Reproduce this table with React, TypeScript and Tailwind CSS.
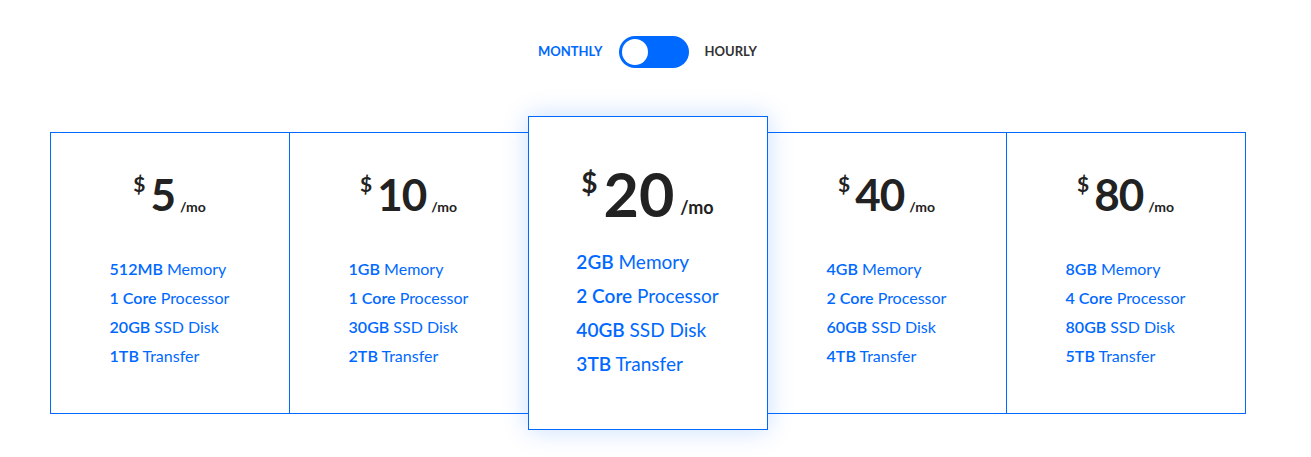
import React from 'react'

type Plan = {
  price: string
  specs: [string, string][]
}

const plans: Plan[] = [
  { price: '5', specs: [['512MB', 'Memory'], ['1 Core', 'Processor'], ['20GB', 'SSD Disk'], ['1TB', 'Transfer']] },
  { price: '10', specs: [['1GB', 'Memory'], ['1 Core', 'Processor'], ['30GB', 'SSD Disk'], ['2TB', 'Transfer']] },
  { price: '20', specs: [['2GB', 'Memory'], ['2 Core', 'Processor'], ['40GB', 'SSD Disk'], ['3TB', 'Transfer']] },
  { price: '40', specs: [['4GB', 'Memory'], ['2 Core', 'Processor'], ['60GB', 'SSD Disk'], ['4TB', 'Transfer']] },
  { price: '80', specs: [['8GB', 'Memory'], ['4 Core', 'Processor'], ['80GB', 'SSD Disk'], ['5TB', 'Transfer']] },
]

function Card({ plan, featured }: { plan: Plan; featured?: boolean }) {
  if (featured) {
    return (
      <div className="relative z-10 -ml-px flex h-[314px] w-[240px] flex-col items-center border border-[#0069ff] bg-white pt-[46px] shadow-[0_0_24px_rgba(0,105,255,0.22)]">
        <div className="flex items-start text-[#222]">
          <span className="mt-[5px] mr-[6px] text-[28px] font-bold leading-none">$</span>
          <span className="text-[61px] font-bold leading-none">{plan.price}</span>
          <span className="mt-[35px] ml-[6px] text-[18px] font-bold leading-none">/mo</span>
        </div>
        <ul className="mt-[21px] text-[19px] leading-[34px] text-[#0069ff]">
          {plan.specs.map(([b, r]) => (
            <li key={r}>
              <span className="font-semibold">{b}</span> {r}
            </li>
          ))}
        </ul>
      </div>
    )
  }
  return (
    <div className="-ml-px flex h-[282px] w-[240px] flex-col items-center border border-[#0069ff] bg-white pt-[39px] first:ml-0">
      <div className="flex items-start text-[#222]">
        <span className="mt-[1px] mr-[5px] text-[21px] font-bold leading-none">$</span>
        <span className="text-[44px] font-bold leading-none tracking-[-1px]">{plan.price}</span>
        <span className="mt-[28px] ml-[5px] text-[14px] font-bold leading-none">/mo</span>
      </div>
      <ul className="mt-[38px] text-[16px] leading-[29px] text-[#0069ff]">
        {plan.specs.map(([b, r]) => (
          <li key={r}>
            <span className="font-semibold">{b}</span> {r}
          </li>
        ))}
      </ul>
    </div>
  )
}

export default function App() {
  return (
    <div className="min-h-[457px] w-[1295px] bg-white font-['Lato','Liberation_Sans',sans-serif]">
      <div className="flex items-center justify-center pt-[36px]">
        <span className="text-[13px] font-bold text-[#0069ff]">MONTHLY</span>
        <div className="mx-[16px] flex h-[32px] w-[70px] items-center rounded-full bg-[#0069ff] px-[3px]">
          <div className="h-[26px] w-[26px] rounded-full bg-white" />
        </div>
        <span className="text-[13px] font-bold text-[#333]">HOURLY</span>
      </div>
      <div className="mt-[48px] flex items-center justify-center">
        {plans.map((p, i) => (
          <Card key={p.price} plan={p} featured={i === 2} />
        ))}
      </div>
    </div>
  )
}
